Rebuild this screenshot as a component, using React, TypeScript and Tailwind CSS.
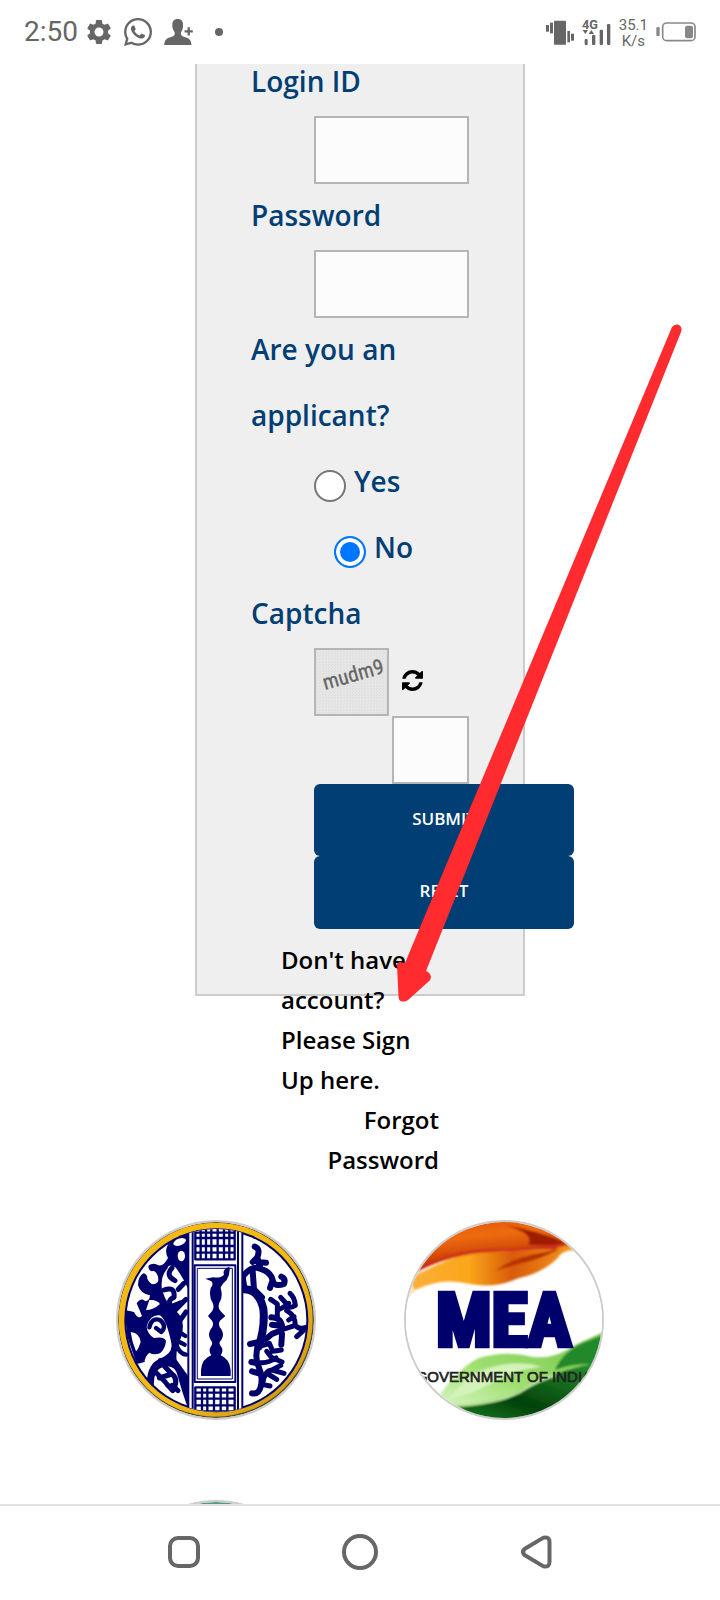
import type { ReactNode } from "react";
import { FaWhatsapp } from "react-icons/fa";
import { MdSettings } from "react-icons/md";

const labelClass = "-mt-0.5 block pb-0.5 text-[28px] leading-[66px] font-semibold text-[#003e73]";
const inputClass = "block h-[68px] border-2 border-[#b5b5b5] bg-[#fcfcfc] px-2 text-2xl outline-none";

export default function App() {
  return (
    <div className="flex h-screen flex-col overflow-hidden bg-white font-['Open_Sans','Noto_Sans',sans-serif]">
      <StatusBar />

      {/* ─── Page ─── */}
      <main className="min-h-0 flex-1 overflow-hidden">
        <div className="relative -mt-3.5">
          <LoginForm />
          <PointerArrow />

          <div className="mx-auto mt-56 grid w-4/5 grid-cols-2 justify-items-center gap-y-20">
            <LogoLink label="Varsity emblem">
              <EmblemLogo />
            </LogoLink>
            <LogoLink label="Ministry of External Affairs">
              <MeaLogo />
            </LogoLink>
            <LogoLink label="Partner">
              <svg viewBox="0 0 196 196" className="size-full">
                <circle cx="98" cy="98" r="98" fill="#4f9a7c" />
                <circle cx="98" cy="98" r="88" fill="#fff" />
              </svg>
            </LogoLink>
          </div>
        </div>
      </main>

      <NavBar />
    </div>
  );
}

function StatusBar() {
  return (
    <header className="flex h-16 shrink-0 items-center justify-between px-6 font-[Roboto,sans-serif] text-[#666]">
      <div className="flex items-center">
        <span className="text-[28px] leading-8">2:50</span>
        <MdSettings size={30} className="ml-1.5" />
        <FaWhatsapp size={32} className="ml-2" />
        <svg viewBox="496 62 87 79" className="ml-2.5 h-[26px] w-[29px]" fill="currentColor">
          <path d="M537 62c-11 0-16 7-16 15 0 6-1 9 1 14 2 6 5 9 6 13 1 7-2 10-9 12-13 4-22 7-23 25h83c-1-18-10-21-23-25-7-2-10-5-9-12 1-4 4-7 5-13 2-5 1-8 1-14 0-9-6-15-16-15z" />
          <path d="M567 87h7v9h9v7h-9v9h-7v-9h-9v-7h9z" />
        </svg>
        <span className="ml-[22px] size-2 rounded-full bg-current" />
      </div>

      <div className="flex items-center gap-2">
        <svg viewBox="558 58 84 75" className="h-[25px] w-7" fill="currentColor">
          <rect x="558" y="73" width="9" height="20" />
          <rect x="570" y="66" width="9" height="32" />
          <rect x="582" y="60" width="36" height="72" rx="2" />
          <rect x="622" y="91" width="8" height="34" />
          <rect x="633" y="99" width="9" height="21" />
        </svg>
        <svg viewBox="668 36 87 108" className="h-9 w-[29px]" fill="currentColor">
          <text x="668" y="80" fontSize="38" fontWeight="700">
            4G
          </text>
          <path d="M670 84h16l-8 12zM688 96l8-12 8 12z" />
          <rect x="676" y="111" width="9" height="18" rx="3" />
          <rect x="698" y="99" width="10" height="30" rx="3" />
          <rect x="721" y="83" width="10" height="46" rx="3" />
          <rect x="743" y="66" width="10" height="63" rx="3" />
        </svg>
        <span className="pt-0.5 text-center text-[15px] leading-4">
          35.1
          <br />
          K/s
        </span>
        <svg viewBox="886 65 120 60" className="h-5 w-10 text-[#888]" fill="currentColor">
          <rect x="887" y="80" width="10" height="28" rx="4" />
          <rect x="906" y="68" width="97" height="53" rx="12" fill="none" stroke="currentColor" strokeWidth="5" />
          <rect x="973" y="76" width="24" height="38" rx="6" />
        </svg>
      </div>
    </header>
  );
}

function LoginForm() {
  return (
    <form
      className="mx-auto flow-root h-[946px] w-[330px] border-2 border-t-0 border-[#ccc] bg-[#efefef] pl-[54px]"
      onSubmit={(e) => e.preventDefault()}
    >
      <label htmlFor="login" className={labelClass}>
        Login ID
      </label>
      <input id="login" type="text" className={`${inputClass} ml-[63px] w-[155px]`} />

      <label htmlFor="password" className={labelClass}>
        Password
      </label>
      <input id="password" type="password" className={`${inputClass} ml-[63px] w-[155px]`} />

      <fieldset className="-mt-0.5">
        <legend className={`${labelClass} w-40`}>Are you an applicant?</legend>
        <Radio id="yes" label="Yes" className="pl-[63px]" />
        <Radio id="no" label="No" className="pl-[83px]" defaultChecked />
      </fieldset>

      <label htmlFor="captcha" className={labelClass}>
        Captcha
      </label>
      <div className="ml-[63px] flex w-[155px] flex-wrap items-center justify-between">
        <CaptchaImage />
        <button type="button" aria-label="Refresh captcha" className="mr-[46px] pb-1">
          <RefreshIcon />
        </button>
        <input id="captcha" type="text" className={`${inputClass} ml-auto w-[77px]`} />
      </div>

      <div className="ml-[63px] w-[260px]">
        <button
          type="submit"
          className="block h-[72px] w-full rounded-md bg-[#003e73] pb-0.5 text-[17px] font-semibold text-white"
        >
          SUBMIT
        </button>
        <button
          type="reset"
          className="block h-[73px] w-full rounded-md bg-[#003e73] pb-1 text-[17px] font-semibold text-white"
        >
          RESET
        </button>
      </div>

      <div className="mt-[11px] ml-[30px] w-[158px] text-2xl leading-10 font-semibold text-black">
        <a href="#signup" className="block">
          Don't have account? Please Sign Up here.
        </a>
        <a href="#forgot" className="block text-right">
          Forgot Password
        </a>
      </div>
    </form>
  );
}

function Radio({
  id,
  label,
  className,
  defaultChecked,
}: {
  id: string;
  label: string;
  className: string;
  defaultChecked?: boolean;
}) {
  return (
    <div className={`flex h-[66px] items-center gap-2 ${className}`}>
      <input
        id={id}
        type="radio"
        name="applicant"
        defaultChecked={defaultChecked}
        className="mt-1.5 size-8 appearance-none rounded-full border-2 border-[#767676] bg-white checked:border-[#0075ff] checked:bg-[#0075ff] checked:shadow-[inset_0_0_0_4px_#fff]"
      />
      <label htmlFor={id} className={labelClass}>
        {label}
      </label>
    </div>
  );
}

function CaptchaImage() {
  return (
    <svg
      viewBox="0 0 71 64"
      className="h-[68px] w-[75px] border-2 border-[#b5b5b5] bg-[#e6e6e6]"
      role="img"
      aria-label="Captcha"
    >
      <defs>
        <pattern id="grain" width="3" height="3" patternUnits="userSpaceOnUse">
          <path d="M0 0h1v1H0zM1 2h1v1H1z" fill="#dcdcdc" />
        </pattern>
      </defs>
      <rect width="71" height="64" fill="url(#grain)" />
      <text
        x="9"
        y="40"
        transform="rotate(-16 9 40)"
        fontFamily="'Roboto Condensed', Roboto, sans-serif"
        fontSize="21"
        fill="#666"
        stroke="#666"
        strokeWidth="0.3"
      >
        mudm9
      </text>
    </svg>
  );
}

function RefreshIcon() {
  return (
    <svg viewBox="0 0 1536 1536" className="size-[21px]" fill="#000">
      <path d="M1511 928q0 5-1 7-64 268-268 434.500t-478 166.500q-146 0-282.500-55t-243.500-157l-129 129q-19 19-45 19t-45-19-19-45v-448q0-26 19-45t45-19h448q26 0 45 19t19 45-19 45l-137 137q71 66 161 102t187 36q134 0 250-65t186-179q11-17 53-117 8-23 30-23h192q13 0 22.500 9.500t9.500 22.500zm25-800v448q0 26-19 45t-45 19h-448q-26 0-45-19t-19-45 19-45l138-138q-148-137-349-137-134 0-250 65t-186 179q-11 17-53 117-8 23-30 23h-199q-13 0-22.500-9.500t-9.500-22.500v-7q65-268 270-434.500t480-166.500q146 0 284 55.500t245 156.500l130-129q19-19 45-19t45 19 19 45z" />
    </svg>
  );
}

/* Red annotation arrow that runs down to the sign-up link */
function PointerArrow() {
  return (
    <svg
      viewBox="390 320 300 690"
      className="pointer-events-none absolute top-[270px] left-1/2 ml-[30px] h-[690px] w-[300px]"
      fill="#ff2b2f"
    >
      <path d="M672 327Q674 324 678 324.500Q683 327 681 332L426 971L428 972Q431 974 431 977Q431 980 428 982L408 1000Q405 1002 402 1001.500Q399 1001 398.500 997L397 965Q397 962 400 962L405 963Z" />
    </svg>
  );
}

function LogoLink({ label, children }: { label: string; children: ReactNode }) {
  return (
    <a
      href="#partner"
      aria-label={label}
      className="block size-[200px] overflow-hidden rounded-full border-2 border-[#ccc] bg-white"
    >
      {children}
    </a>
  );
}

function EmblemLogo() {
  return (
    <svg viewBox="24 36 588 588" className="size-full">
      <defs>
        <clipPath id="disc">
          <circle cx="319" cy="331" r="274" />
        </clipPath>
        <linearGradient id="ring" x1="0" y1="0" x2="1" y2="1">
          <stop offset="0.6" stopColor="#f5b914" />
          <stop offset="1" stopColor="#c08d16" />
        </linearGradient>
      </defs>
      <circle cx="318" cy="330" r="294" fill="#4a4530" />
      <circle cx="317" cy="329" r="291" fill="url(#ring)" />
      <circle cx="319" cy="331" r="276" fill="#00006c" />
      <circle cx="319" cy="331" r="270" fill="#fff" />

      <g clipPath="url(#disc)" fill="none" stroke="#00006c" strokeLinecap="round" strokeLinejoin="round">
        {/* left scrollwork */}
        <g fill="#00006c" stroke="none">
          <path d="M180 95L236 55V240Q216 196 196 172Q176 160 172 176Q150 200 156 240Q172 290 200 305Q228 330 214 380Q196 420 200 450L236 500V600Q214 540 204 500Q196 462 160 470Q128 480 132 530L110 520Q112 460 150 446Q190 430 184 400Q170 330 150 316Q120 312 110 350Q112 372 132 384Q160 378 168 392Q166 416 150 430Q130 436 118 428Q104 440 104 456L80 462L52 380L44 300L72 306Q84 330 96 318Q84 290 80 280Q92 262 104 272Q118 276 120 256Q92 252 84 226Q84 200 100 190Q112 192 112 206Q124 232 144 216Q148 196 134 186Q112 184 116 166Q130 156 146 166Q160 170 174 144Q160 120 180 95Z" />
        </g>
        <g fill="#fff" stroke="none">
          <ellipse cx="214" cy="138" rx="11" ry="16" />
          <ellipse cx="209" cy="96" rx="20" ry="10" transform="rotate(-20 209 96)" />
          <ellipse cx="130" cy="203" rx="12" ry="20" />
          <path d="M62 366Q90 370 92 396Q84 420 78 424Q66 396 62 366Z" />
          <path d="M118 270Q140 268 150 282Q130 300 108 300Z" />
        </g>
        <path d="M195 212Q165 196 186 174M162 240Q196 228 192 262Q170 270 184 290L214 278M205 238L222 220M196 300L228 268M205 338L228 306" strokeWidth="15" />
        <path d="M118 352Q124 322 150 330Q172 348 154 366L138 354M205 364L226 378M198 400Q206 430 228 434M208 396L224 404" strokeWidth="13" />
        <path d="M150 452Q172 480 186 492L148 504M186 492Q208 508 188 542L170 522M186 526L204 542M140 490L166 516" strokeWidth="15" />

        {/* right scrollwork */}
        <path d="M398 200Q425 165 450 176Q484 186 488 212Q494 232 522 222Q528 206 514 200M488 210L480 234M434 110Q452 116 442 142L428 156M442 142L452 176M468 158L444 156" strokeWidth="18" />
        <path d="M400 238Q446 236 460 296Q466 350 446 410" strokeWidth="24" />
        <path d="M398 200L404 240M428 184L432 238M430 236L456 262" strokeWidth="18" />
        <path d="M446 396L420 402M446 400Q432 440 446 470Q460 500 452 530Q446 554 426 550M444 460L424 456M446 490L426 484" strokeWidth="18" />
        <path d="M482 268L502 282V320M512 262L530 282Q534 300 556 286Q554 262 540 250M504 300Q530 288 536 280" strokeWidth="15" />
        <path d="M484 322Q520 324 516 360L486 372M486 344L516 348M486 372L466 388M516 372L514 404" strokeWidth="18" />
        <path d="M530 302Q556 316 556 346Q568 360 588 352M556 346L526 356M580 362L560 380M552 320L536 330" strokeWidth="15" />
        <path d="M454 408L478 400L488 424L514 420M470 424L484 442L516 456M452 458Q474 460 498 444" strokeWidth="15" />
        <path d="M458 524Q462 482 486 480L522 490M486 480L512 466M474 492L500 508M460 524L480 528" strokeWidth="15" />

        {/* central column */}
        <rect x="236" y="40" width="162" height="590" fill="#fff" stroke="none" />
        <path d="M235 50V620M248 60V610M384 60V610M397 50V620" strokeWidth="6" />
        <path d="M256 148V40H374V148ZM272 40V148M288 40V148M304 40V148M323 40V148M342 40V148M358 40V148M256 68H374M256 84H374M256 108H374M256 128H374" strokeWidth="7" />
        <path d="M256 532V620H374V532ZM276 532V620M292 532V620M312 532V620M332 532V620M352 532V620M256 548H374M256 566H374M256 586H374M256 604H374" strokeWidth="7" />
        <rect x="254" y="166" width="122" height="350" strokeWidth="6" />
        <rect x="263" y="175" width="104" height="332" strokeWidth="3" />
      </g>
      <path
        fill="#00006c"
        d="M286 206L310 202Q332 205 342 194Q336 178 358 170Q362 190 350 210Q334 224 332 234Q340 262 328 278Q322 294 332 304L346 318L330 332Q322 344 334 358Q344 374 334 390Q322 400 336 414Q340 426 332 436Q358 446 362 480V498H273V480Q276 446 304 436Q296 426 300 414Q312 400 302 390Q292 374 302 358Q314 344 306 332L294 318L306 304Q314 294 308 278Q296 262 302 234Q312 222 304 214Z"
      />
    </svg>
  );
}

function MeaLogo() {
  return (
    <svg viewBox="33 36 588 588" className="size-full">
      <defs>
        <linearGradient id="saffron" x1="0" y1="0" x2="0.3" y2="1">
          <stop offset="0" stopColor="#d94c04" />
          <stop offset="0.4" stopColor="#ee6c0a" />
          <stop offset="1" stopColor="#b01c00" />
        </linearGradient>
        <linearGradient id="gold" x1="0" y1="0" x2="1" y2="0">
          <stop offset="0" stopColor="#fbb03a" />
          <stop offset="0.35" stopColor="#fba61a" />
          <stop offset="0.6" stopColor="#d95a08" />
          <stop offset="1" stopColor="#f9a020" />
        </linearGradient>
        <linearGradient id="lime" x1="0" y1="1" x2="1" y2="0">
          <stop offset="0" stopColor="#dff6cf" />
          <stop offset="0.4" stopColor="#9fe070" />
          <stop offset="1" stopColor="#6cc043" />
        </linearGradient>
        <linearGradient id="forest" x1="0" y1="1" x2="1" y2="0">
          <stop offset="0" stopColor="#1d8a24" />
          <stop offset="0.4" stopColor="#02420a" />
          <stop offset="1" stopColor="#2d9a35" />
        </linearGradient>
        <filter id="soft">
          <feGaussianBlur stdDeviation="3" />
        </filter>
      </defs>
      <rect x="33" y="36" width="588" height="588" fill="#fff" />
      <g filter="url(#soft)">
        <path d="M20 290Q60 220 130 212L60 170Z" fill="#fde0bd" />
        <path d="M40 210Q100 170 200 135Q350 110 540 92L560 126Q510 110 486 146Q440 190 370 205Q300 236 225 222Q140 200 60 240Z" fill="url(#gold)" />
        <path d="M300 182Q360 140 440 128L495 118Q430 150 380 160Q330 172 270 192Z" fill="#b83204" />
        <path d="M40 200L60 20H560L540 110Q500 100 480 120Q400 112 300 126Q160 130 40 200Z" fill="url(#saffron)" />
        <path d="M330 46Q420 60 512 98Q460 110 400 104Q420 70 330 46Z" fill="#9e1a00" />
        <path d="M50 192Q150 122 300 120Q420 118 505 106" fill="none" stroke="#d0182c" strokeWidth="5" />
        <path d="M110 590Q180 480 250 445Q330 420 410 440Q480 450 540 405L640 360V520L420 560Q250 580 180 600Z" fill="url(#lime)" />
        <path d="M220 500Q330 440 440 470Q350 480 290 520Q220 560 160 565Z" fill="#d3f3b8" />
        <path d="M480 480Q500 430 560 400L640 370V470Q560 450 480 480Z" fill="#22882b" />
        <path d="M150 590Q280 580 360 550Q440 490 640 450V640H200Z" fill="url(#forest)" />
        <path d="M150 588Q290 586 370 548Q430 508 480 496" fill="none" stroke="#b9e89a" strokeWidth="8" />
      </g>
      <text
        x="326"
        y="408"
        textAnchor="middle"
        fontFamily="'Roboto Condensed', Roboto, sans-serif"
        fontSize="220"
        fontWeight="700"
        fill="#00006c"
        stroke="#00006c"
        strokeWidth="14"
      >
        MEA
      </text>
      <text
        x="62"
        y="517"
        fontFamily="'Liberation Sans', sans-serif"
        fontSize="45"
        fill="#222"
        stroke="#222"
        strokeWidth="2"
      >
        GOVERNMENT OF INDIA
      </text>
    </svg>
  );
}

function NavBar() {
  return (
    <nav className="flex h-24 shrink-0 items-center justify-center gap-35 border-t-2 border-[#e2e2e2] bg-white pb-0.5 text-[#666]">
      <button type="button" aria-label="Recent apps">
        <svg viewBox="0 0 36 36" className="size-9" fill="none" stroke="currentColor" strokeWidth="4">
          <rect x="4" y="4" width="28" height="28" rx="8" />
        </svg>
      </button>
      <button type="button" aria-label="Home">
        <svg viewBox="0 0 36 36" className="size-9" fill="none" stroke="currentColor" strokeWidth="4">
          <circle cx="18" cy="18" r="16" />
        </svg>
      </button>
      <button type="button" aria-label="Back">
        <svg viewBox="0 0 36 36" className="size-9" fill="none" stroke="currentColor" strokeWidth="4">
          <path d="M25.500 3.600L6.500 15Q3.500 18 6.500 21L25.500 32.400Q31.500 33.500 31.500 28V8Q31.500 2.500 25.500 3.600Z" strokeLinejoin="round" />
        </svg>
      </button>
    </nav>
  );
}
